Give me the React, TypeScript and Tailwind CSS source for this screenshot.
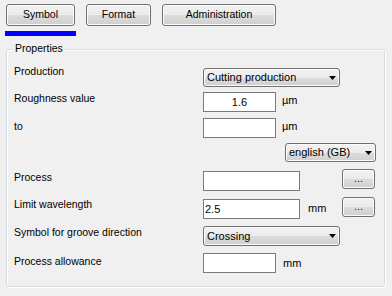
import type { ReactNode } from 'react';

const font = { fontFamily: '"Liberation Sans", Arial, sans-serif' };

const btnFace =
    'border border-[#707070] rounded-[3px] bg-[linear-gradient(to_bottom,#f2f2f2_0%,#ebebeb_50%,#dddddd_50%,#cfcfcf_100%)] shadow-[inset_0_0_0_1px_#fcfcfc]';

const TabButton = ({ label, width }: { label: string; width: string }) => (
    <div className={`${btnFace} ${width} h-[22px] flex items-center justify-center text-[10.5px] text-black`}>
        {label}
    </div>
);

const Combo = ({ value, width, height = 'h-[19px]' }: { value: string; width: string; height?: string }) => (
    <div className={`${btnFace} ${width} ${height} flex items-center justify-between pl-[3px] pr-[3px] text-[11px] text-black`}>
        <span>{value}</span>
        <svg width="7" height="4" viewBox="0 0 7 4">
            <path d="M0 0h7L3.5 4z" fill="#000" />
        </svg>
    </div>
);

const TextBox = ({ value = '', width, align = 'center' }: { value?: string; width: string; align?: 'center' | 'left' }) => (
    <div
        className={`${width} h-[20px] bg-white border border-[#7a7a7a] flex items-center text-[11px] text-black ${
            align === 'center' ? 'justify-center' : 'justify-start pl-[1px]'
        }`}
    >
        {value}
    </div>
);

const DotsButton = () => (
    <div className={`${btnFace} w-[33px] h-[20px] flex items-center justify-center text-[11px] leading-none text-[#222]`}>
        <span className="-mt-[2px]">...</span>
    </div>
);

const Row = ({ label, labelShift, height, children }: { label?: string; labelShift: string; height: string; children: ReactNode }) => (
    <div className={`flex items-start ${height}`}>
        <div className={`w-[189px] shrink-0 text-[10.5px] leading-[13px] text-black ${labelShift}`}>{label}</div>
        <div className="flex items-start">{children}</div>
    </div>
);

const Unit = ({ text, className }: { text: string; className: string }) => (
    <span className={`text-[11px] leading-[13px] text-black ${className}`}>{text}</span>
);

export default function App() {
    return (
        <div className="w-[392px] h-[296px] bg-[#f0f0f0] overflow-hidden" style={font}>
            <div className="flex gap-[11px] pl-[6px] pt-[4px]">
                <TabButton label="Symbol" width="w-[69px]" />
                <TabButton label="Format" width="w-[65px]" />
                <TabButton label="Administration" width="w-[114px]" />
            </div>
            <div className="ml-[5px] mt-[5px] w-[71px] h-[5px] bg-[#0000ff]" />

            <div className="relative ml-[6px] mt-[13px] w-[379px] h-[238px] border border-[#d5dfe5] rounded-[3px] shadow-[inset_1px_1px_0_#fff,1px_1px_0_#fff]">
                <span className="absolute -top-[8px] left-[6px] px-[2px] bg-[#f0f0f0] text-[10.5px] leading-[13px] text-black">
                    Properties
                </span>

                <div className="pl-[7px] pt-[18px]">
                    <Row label="Production" labelShift="-mt-[3px]" height="h-[24px]">
                        <Combo value="Cutting production" width="w-[137px]" />
                    </Row>
                    <Row label="Roughness value" labelShift="mt-0" height="h-[26px]">
                        <TextBox value="1.6" width="w-[73px]" />
                        <Unit text="µm" className="ml-[6px] mt-[2px]" />
                    </Row>
                    <Row label="to" labelShift="mt-[2px]" height="h-[25px]">
                        <TextBox width="w-[73px]" />
                        <Unit text="µm" className="ml-[6px] mt-[2px]" />
                    </Row>
                    <Row labelShift="mt-0" height="h-[26px]">
                        <div className="ml-[82px]">
                            <Combo value="english (GB)" width="w-[91px]" />
                        </div>
                    </Row>
                    <Row label="Process" labelShift="mt-[2px]" height="h-[28px]">
                        <div className="mt-[2px]">
                            <TextBox width="w-[97px]" />
                        </div>
                        <div className="w-[42px]" />
                        <DotsButton />
                    </Row>
                    <Row label="Limit wavelength" labelShift="mt-[1px]" height="h-[29px]">
                        <div className="mt-[2px]">
                            <TextBox value="2.5" width="w-[97px]" align="left" />
                        </div>
                        <div className="w-[42px] pl-[8px] mt-[5px] text-[11px] leading-[13px]">mm</div>
                        <DotsButton />
                    </Row>
                    <Row label="Symbol for groove direction" labelShift="mt-0" height="h-[27px]">
                        <Combo value="Crossing" width="w-[137px]" height="h-[20px]" />
                    </Row>
                    <Row label="Process allowance" labelShift="mt-[2px]" height="h-[22px]">
                        <TextBox width="w-[73px]" />
                        <Unit text="mm" className="ml-[7px] mt-[4px]" />
                    </Row>
                </div>
            </div>
        </div>
    );
}
